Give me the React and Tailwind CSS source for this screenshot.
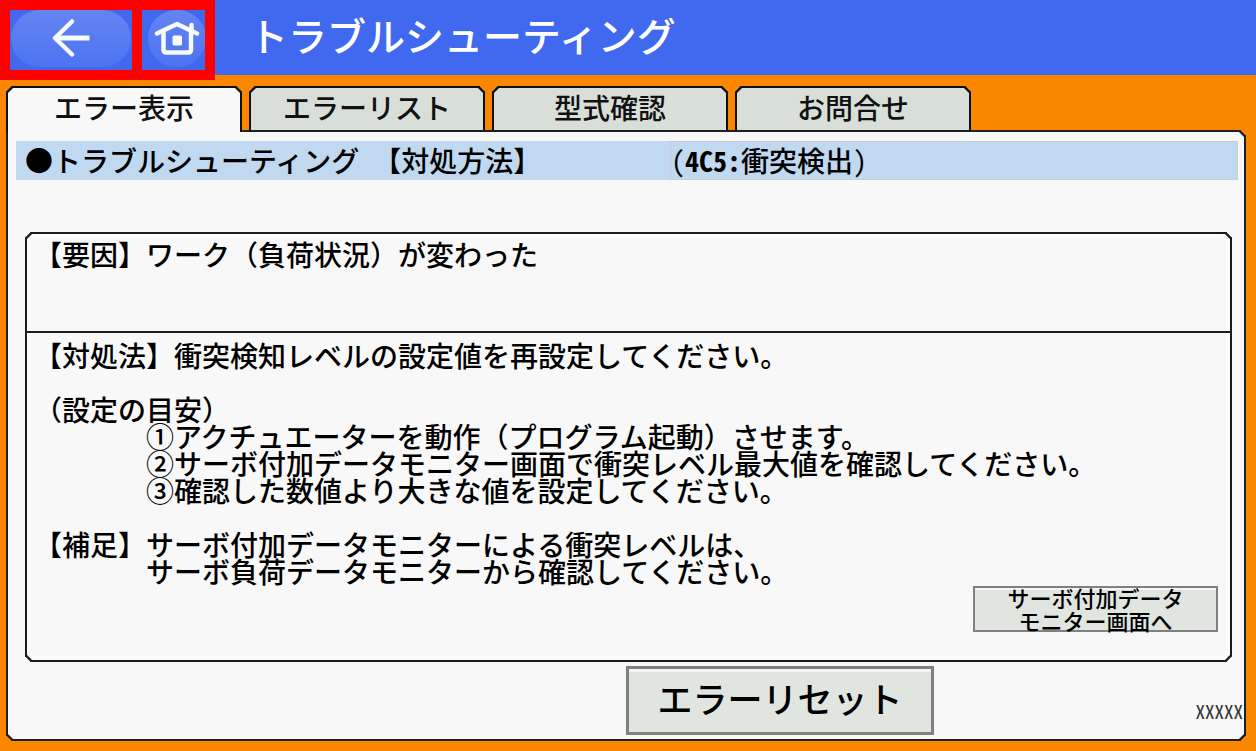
import React, { useState } from 'react';
import clsx from 'clsx';

const TABS = ['エラー表示', 'エラーリスト', '型式確認', 'お問合せ'];

const STEPS = [
  '①アクチュエーターを動作（プログラム起動）させます。',
  '②サーボ付加データモニター画面で衝突レベル最大値を確認してください。',
  '③確認した数値より大きな値を設定してください。',
];

function BackIcon() {
  return (
    <svg width="40" height="40" viewBox="0 0 40 40" fill="none" stroke="#f6fbf8" strokeWidth="4.5" strokeLinecap="round" strokeLinejoin="round">
      <path d="M21 2.500 4 19l17 16.500" />
      <path d="M5 19h33.500" strokeWidth="5" strokeLinecap="butt" />
    </svg>
  );
}

function HomeIcon() {
  return (
    <svg width="46" height="36" viewBox="0 0 46 36" fill="none" stroke="#f6fbf8" strokeWidth="4.500" strokeLinecap="round" strokeLinejoin="round">
      <path d="M3 12.500 23 3l20 9.500" />
      <path d="M9.500 12v16.500q0 3 3 3h21.500q3 0 3-3V12" />
      <path d="M37.500 4v6" />
      <rect x="18.500" y="14.500" width="9.500" height="10" rx="1.500" fill="#f6fbf8" stroke="none" />
    </svg>
  );
}

function Header() {
  return (
    <header className="flex h-[75px] items-start gap-[34px] bg-[#4169f0]">
      <nav className="flex h-20 shrink-0 gap-[10px] bg-[#ff0000] p-[10px]">
        <button type="button" aria-label="戻る" className="h-[60px] w-[122px] bg-[#4169f0] px-px pb-[3px]">
          <span className="flex h-full items-center justify-center rounded-full bg-gradient-to-b from-[#6484f1] to-[#4c73f1]">
            <BackIcon />
          </span>
        </button>
        <button type="button" aria-label="ホーム" className="flex h-[60px] w-[63px] justify-center overflow-hidden bg-[#4169f0] pb-[3px] pl-[6px]">
          <span className="flex h-full w-[58px] shrink-0 items-center justify-center rounded-full bg-gradient-to-b from-[#6484f1] to-[#4c73f1]">
            <HomeIcon />
          </span>
        </button>
      </nav>
      <h1 className="text-[39px] leading-[68px] font-medium text-white">トラブルシューティング</h1>
    </header>
  );
}

export default function App() {
  const [active, setActive] = useState(0);

  return (
    <div className="flex min-h-screen flex-col bg-[#fb8700] font-['Noto_Sans_CJK_JP',sans-serif] text-black">
      <Header />

      <main className="flex flex-1 flex-col pt-[11px] pr-[10px] pb-[10px] pl-[6px]">
        {/* Tabs */}
        <div role="tablist" className="z-10 -mb-[2px] flex items-start gap-[7px]">
          {TABS.map((tab, i) => (
            <button
              key={tab}
              type="button"
              role="tab"
              aria-selected={i === active}
              onClick={() => setActive(i)}
              className={clsx(
                'flex w-[236px] justify-center rounded-t-[6px] border-2 border-b-0 border-[#111111] text-[28px] leading-[38px] font-medium text-[#111111] [corner-shape:bevel]',
                i === active ? 'h-[46px] bg-[#f8f8f8]' : 'h-11 bg-[#d8dfd9]'
              )}
            >
              {tab}
            </button>
          ))}
        </div>

        {/* Panel */}
        <section className="flex flex-1 flex-col rounded-[6px] rounded-tl-none border-2 border-[#1c2026] bg-[#f8f8f8] [corner-shape:bevel]">
          <div className="mt-[9px] mr-[6px] ml-2 flex h-[39px] bg-[#c0d8f0] text-[28px] leading-9 font-medium">
            <h2 className="flex w-[654px] shrink-0 gap-[14px] pt-px pl-[9px]">
              <span>●トラブルシューティング</span>
              <span>【対処方法】</span>
            </h2>
            <p className="h-full flex-1 border border-[#c8ccd4]">
              <span className="font-['Noto_Sans_Mono_CJK_JP',monospace] font-normal">(</span>
              <span className="font-['Noto_Sans_Mono_CJK_JP',monospace] font-bold">4C5:</span>
              <span>衝突検出</span>
              <span className="font-['Noto_Sans_Mono_CJK_JP',monospace] font-normal">)</span>
            </p>
          </div>

          <div className="mt-[52px] mr-[12px] ml-[17px] flex flex-1 flex-col rounded-[6px] border-2 border-[#1c1c1c] text-[28px] leading-[27px] font-medium whitespace-nowrap ring-4 ring-white/50 ring-inset [corner-shape:bevel]">
            <div className="h-[99px] border-b-2 border-[#1c1c1c] px-[7px] pt-[7px]">
              <p>【要因】ワーク（負荷状況）が変わった</p>
            </div>
            <div className="flex flex-1 flex-col px-[7px] pt-[9px]">
              <p>【対処法】衝突検知レベルの設定値を再設定してください。</p>
              <p className="mt-[27px]">（設定の目安）</p>
              <ol className="pl-28">
                {STEPS.map((step) => (
                  <li key={step}>{step}</li>
                ))}
              </ol>
              <p className="mt-[27px]">【補足】サーボ付加データモニターによる衝突レベルは、</p>
              <p className="pl-28">サーボ負荷データモニターから確認してください。</p>
            </div>
            <button
              type="button"
              className="mr-3 mb-7 flex h-[46px] w-[245px] items-center justify-center self-end border-2 border-[#808080] bg-[#e0e5e0] text-[22px] leading-[23px] shadow-[inset_0_2px_0_#f4f6f4]"
            >
              サーボ付加データ
              <br />
              モニター画面へ
            </button>
          </div>

          <footer className="grid grid-cols-2 pt-1 pb-1">
            <div className="col-start-2 flex items-center justify-between">
              <button
                type="button"
                className="flex h-[69px] w-[308px] justify-center border-3 border-[#808080] bg-[#e0e5e0] text-[35px] leading-[58px] font-medium shadow-[inset_0_3px_0_#f4f6f4]"
              >
                エラーリセット
              </button>
              <span className="pt-5 pr-px font-['Noto_Sans_Mono_CJK_JP',monospace] text-[19px] leading-6 text-[#333333]">XXXXX</span>
            </div>
          </footer>
        </section>
      </main>
    </div>
  );
}
